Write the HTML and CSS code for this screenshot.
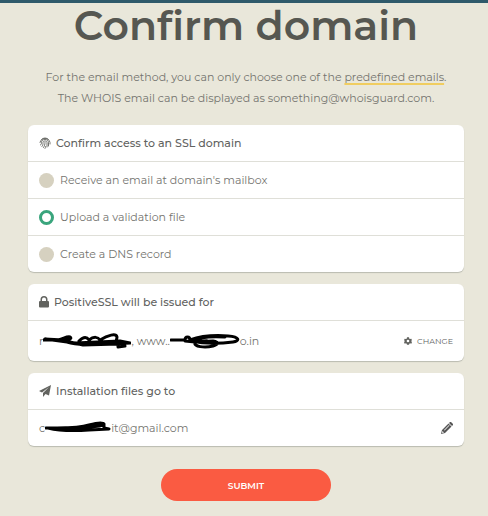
FILE: index.html
```html
<!DOCTYPE html>
<html lang="en">
<head>
    <meta charset="utf-8">
    <meta name="viewport" content="width=device-width, initial-scale=1">
    <title>Confirm domain</title>
    <link rel="stylesheet" href="styles.css">
</head>
<body>
    <main>
        <h1>Confirm domain</h1>
        <p class="intro">For the email method, you can only choose one of the <a href="#">predefined emails</a>.<br>
            The WHOIS email can be displayed as something@whoisguard.com.</p>

        <form>
            <section class="card" role="radiogroup" aria-labelledby="method-title">
                <h2 id="method-title">
                    <svg class="icon" viewBox="0 0 24 24" fill="none" stroke="currentColor" stroke-width="1.8" stroke-linecap="round" aria-hidden="true">
                        <path d="M5 5c4-4 10-4 14 0M2 11c1-5 5-8 10-8s9 3 10 8v3M3 16c2-1 2-3 2-5 0-4 3-6 7-6s7 3 7 6v7M6 19c2-2 2-5 2-8 0-2 2-3 4-3s4 1 4 3v9M9 21c2-3 3-6 3-10M12 23c1-1 1-3 1-4"/>
                    </svg>
                    Confirm access to an SSL domain
                </h2>
                <label class="row"><input type="radio" name="method" value="email">Receive an email at domain's mailbox</label>
                <label class="row"><input type="radio" name="method" value="file" checked>Upload a validation file</label>
                <label class="row"><input type="radio" name="method" value="dns">Create a DNS record</label>
            </section>

            <section class="card">
                <h2>
                    <svg class="icon lock" viewBox="0 0 20 24" aria-hidden="true">
                        <path fill="currentColor" fill-rule="evenodd" d="M3 10V7a7 7 0 0 1 14 0v3h1a2 2 0 0 1 2 2v9a2 2 0 0 1-2 2H2a2 2 0 0 1-2-2v-9a2 2 0 0 1 2-2zM6 10h8V7a4 4 0 0 0-8 0z"/>
                    </svg>
                    PositiveSSL will be issued for
                </h2>
                <div class="row tall">
                    <div class="value">
                        <span>r</span>
                        <svg class="scribble first" viewBox="0 0 88 16" aria-hidden="true">
                            <path d="M0 7h14c6-1 10-4 13-3 3 2-3 3-7 3L2 6l22 3c10 3 22 3 45 2l18-1-10-2-45 2M36 8c5-5 8-4 10-1 5-4 9-3 11 0 8-5 16-7 17-3l-1 6M27 9l13 3 35-1v3l7-1"/>
                        </svg>
                        <span>, www..</span>
                        <svg class="scribble second" viewBox="0 0 70 16" aria-hidden="true">
                            <path d="M1 7h14c0-4 5-4 5 0 11-4 25-5 38-4 12 1 12 5 5 6-16 2-28 2-42-1 9-4 21-5 34-4M15 8l10 1c-2 5 10 6 18 4 6-2 6-4 0-5l-20 1M22 8h15"/>
                        </svg>
                        <span>o.in</span>
                    </div>
                    <button type="button" class="change">
                        <svg viewBox="0 0 24 24" aria-hidden="true">
                            <path fill="currentColor" fill-rule="evenodd" d="M9 1h6l1 4 2 1 4-1 2 5-3 2 3 3-2 5-4-1-2 1-1 3H9l-1-3-2-1-4 1-2-5 3-3-3-2 2-5 4 1 2-1zM12 8a4 4 0 1 0 0 8 4 4 0 0 0 0-8z"/>
                        </svg>
                        CHANGE
                    </button>
                </div>
            </section>

            <section class="card">
                <h2>
                    <svg class="icon" viewBox="0 0 24 24" aria-hidden="true">
                        <path fill="currentColor" d="M24 0l-4 21-7-3-5 6v-8L20 4 6 15l-6-3z"/>
                    </svg>
                    Installation files go to
                </h2>
                <div class="row">
                    <div class="value">
                        <span>c</span>
                        <svg class="scribble third" viewBox="0 0 66 16" aria-hidden="true">
                            <path d="M1 8c17 0 31 1 43-3 7-2 14-3 15-1v4l5 1-20 1c-14 1-29 1-41-2 17 0 38 0 56-3M8 9l27-1 20-2"/>
                        </svg>
                        <span>it@gmail.com</span>
                    </div>
                    <button type="button" class="edit" aria-label="Edit email">
                        <svg viewBox="0 0 24 24" aria-hidden="true">
                            <path fill="currentColor" fill-rule="evenodd" d="M0 24l2-8L15 3l6 6L8 22zM16 2l2-2h2l4 4v2l-2 2zM3 18l-1 4 4-1zM6 16l10-10 1 1L7 17z"/>
                        </svg>
                    </button>
                </div>
            </section>

            <button type="submit" class="submit">SUBMIT</button>
        </form>
    </main>
</body>
</html>
```

FILE: styles.css
```css
* {
    box-sizing: border-box;
}
body {
    margin: 0;
    border-top: 3px solid #2f5a6b;
    background: #e9e7da;
    color: #74746f;
    font-family: Montserrat, Inter, "Liberation Sans", sans-serif;
    font-size: 11px;
    line-height: 21px;
}
main {
    padding: 0 24px 14px 28px;
}
h1 {
    margin: 0;
    color: #565751;
    font-size: 41px;
    font-weight: 600;
    line-height: 44px;
    text-align: center;
}
.intro {
    margin: 20px 0 16px;
    text-align: center;
}
.intro a {
    color: inherit;
    text-decoration: underline 2px #f0cd60;
    text-decoration-skip-ink: none;
    text-underline-offset: 2px;
}
.card {
    margin-bottom: 12px;
    border-radius: 6px;
    background: #fff;
    box-shadow: 0 1px 1px #babbb0;
}
h2 {
    display: flex;
    align-items: center;
    gap: 5px;
    height: 36px;
    margin: 0;
    padding: 0 11px;
    color: #62635f;
    font-size: 11px;
    font-weight: 500;
}
.icon {
    width: 12px;
    height: 12px;
}
.lock {
    width: 10px;
}
.row {
    display: flex;
    align-items: center;
    height: 37px;
    padding: 0 11px;
    border-top: 1px solid #dfdfd8;
}
.tall {
    height: 41px;
}
input[type="radio"] {
    appearance: none;
    width: 15px;
    height: 15px;
    margin: 0 6px 0 0;
    border-radius: 50%;
    background: #d6d1c0;
}
input[type="radio"]:checked {
    border: 3px solid #3aa57d;
    background: #fff;
}
.value {
    display: flex;
    align-items: center;
    flex: 1;
}
.scribble {
    height: 16px;
    fill: none;
    stroke: #000;
    stroke-width: 3;
    stroke-linecap: round;
    stroke-linejoin: round;
}
.first {
    width: 88px;
}
.second {
    width: 70px;
}
.third {
    width: 66px;
}
button {
    border: 0;
    font-family: inherit;
    cursor: pointer;
}
.change {
    display: flex;
    align-items: center;
    gap: 5px;
    padding: 0;
    background: none;
    color: #62635f;
    font-size: 8px;
}
.change svg {
    width: 8px;
    height: 8px;
}
.edit {
    display: flex;
    padding: 0;
    background: none;
    color: #555;
}
.edit svg {
    width: 12px;
    height: 12px;
}
.submit {
    display: block;
    width: 170px;
    height: 32px;
    margin: 23px auto 0;
    border-radius: 16px;
    background: #fa5b42;
    color: #fff;
    font-size: 9px;
    font-weight: 600;
}
```
